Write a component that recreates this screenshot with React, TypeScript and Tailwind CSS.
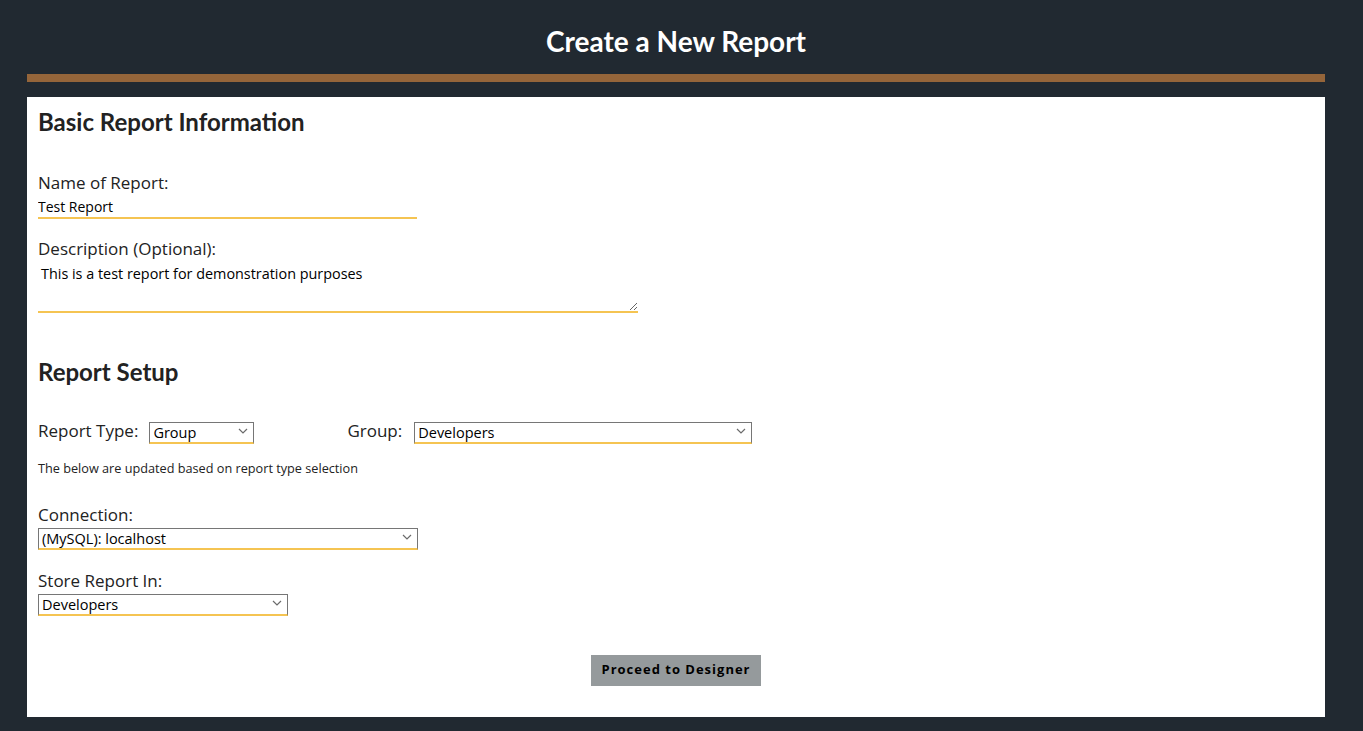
import React from "react";

function Chevron() {
  return (
    <svg className="pointer-events-none absolute right-[6px] top-1/2 -translate-y-1/2" width="10" height="6" viewBox="0 0 10 6">
      <path d="M1 1 L5 5 L9 1" fill="none" stroke="#6b6b6b" strokeWidth="1.2" />
    </svg>
  );
}

function Select({ value, className }: { value: string; className: string }) {
  return (
    <div className={`relative h-[22px] ${className}`}>
      <select
        defaultValue={value}
        className="h-full w-full appearance-none border border-[#767676] border-b-2 border-b-[#f5c452] bg-white pl-[3px] text-[14.5px] leading-[18px] text-black outline-none"
        style={{ fontFamily: "'Open Sans', 'DejaVu Sans', sans-serif" }}
      >
        <option>{value}</option>
      </select>
      <Chevron />
    </div>
  );
}

export default function App() {
  const body = { fontFamily: "'Open Sans', 'Noto Sans', sans-serif" };
  const head = { fontFamily: "Lato, 'Open Sans', sans-serif" };
  return (
    <div className="min-h-[731px] bg-[#212931] pl-[27px] pr-[38px] pb-[14px]" style={body}>
      <div className="flex h-[74px] items-center justify-center pt-[8px]">
        <h1 className="text-[28px] font-bold text-white" style={head}>
          Create a New Report
        </h1>
      </div>
      <div className="h-[8px] bg-[#95653a]" />
      <div className="mt-[15px] h-[620px] bg-white px-[11px] pt-[9px] text-[#222]">
        <h2 className="text-[24px] font-bold leading-[32px]" style={head}>
          Basic Report Information
        </h2>
        <div className="mt-[34px] text-[17px] leading-[22px]">Name of Report:</div>
        <input
          defaultValue="Test Report"
          className="block h-[25px] w-[379px] border-b-2 border-[#f5c452] pt-[1px] text-[14px] text-black outline-none"
        />
        <div className="mt-[19px] text-[17px] leading-[22px]">Description (Optional):</div>
        <textarea
          defaultValue="This is a test report for demonstration purposes"
          className="mt-[3px] block h-[50px] w-[600px] resize border-b-2 border-[#f5c452] px-[3px] pt-[2px] text-[14.4px] leading-[18px] text-black outline-none"
        />
        <h2 className="mt-[43px] text-[24px] font-bold leading-[32px]" style={head}>
          Report Setup
        </h2>
        <div className="mt-[30px] flex items-center">
          <span className="text-[17px]">Report Type:</span>
          <Select value="Group" className="ml-[11px] w-[105px]" />
          <span className="ml-[93px] text-[17px]">Group:</span>
          <Select value="Developers" className="ml-[12px] w-[338px]" />
        </div>
        <div className="mt-[16px] text-[12.7px] leading-[16px]">
          The below are updated based on report type selection
        </div>
        <div className="mt-[28px] text-[17px] leading-[22px]">Connection:</div>
        <Select value="(MySQL): localhost" className="w-[380px]" />
        <div className="mt-[22px] text-[17px] leading-[22px]">Store Report In:</div>
        <Select value="Developers" className="w-[250px]" />
        <div className="mt-[41px] flex justify-center">
          <button className="h-[31px] w-[170px] bg-[#959a9c] text-[13px] font-bold tracking-[1px] text-black">
            Proceed to Designer
          </button>
        </div>
      </div>
    </div>
  );
}
